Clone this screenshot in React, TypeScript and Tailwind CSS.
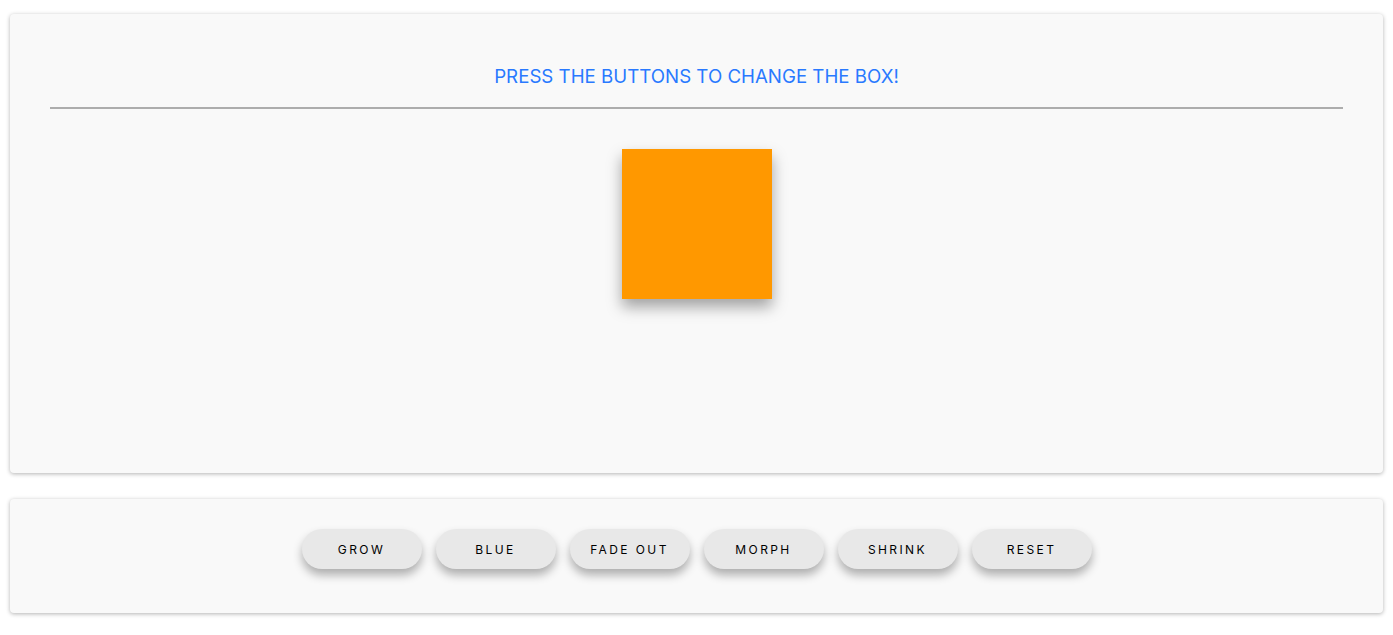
import { useState } from "react";

const buttons = ["Grow", "Blue", "Fade out", "Morph", "Shrink", "Reset"];

export default function App() {
  const [active, setActive] = useState("");

  return (
    <div className="min-h-screen w-full bg-white px-[10px] pt-[14px] font-['Inter',sans-serif]">
      <div className="flex h-[459px] flex-col items-center rounded-[4px] bg-[#f9f9f9] px-[40px] shadow-[0_1px_4px_rgba(0,0,0,0.3)]">
        <h1 className="mt-[51px] text-[18.7px] uppercase leading-[24px] text-[#2979ff]">
          Press the buttons to change the box!
        </h1>
        <div className="mt-[18px] h-[2px] w-full bg-[#adadad]" />
        <div className="mt-[40px] h-[150px] w-[150px] bg-[#ff9800] shadow-[0_8px_14px_rgba(0,0,0,0.35)]" />
      </div>

      <div className="mt-[26px] flex h-[114px] items-start justify-center gap-[14px] rounded-[4px] bg-[#f9f9f9] pt-[30px] shadow-[0_1px_4px_rgba(0,0,0,0.3)]">
        {buttons.map((b) => (
          <button
            key={b}
            onClick={() => setActive(b)}
            className={
              "h-[40px] w-[120px] rounded-full bg-[#e8e8e8] pt-[1px] text-[12px] uppercase tracking-[0.2em] text-black shadow-[0_6px_10px_rgba(0,0,0,0.3)] " +
              (active === b ? "bg-[#dcdcdc]" : "")
            }
          >
            {b}
          </button>
        ))}
      </div>
    </div>
  );
}
